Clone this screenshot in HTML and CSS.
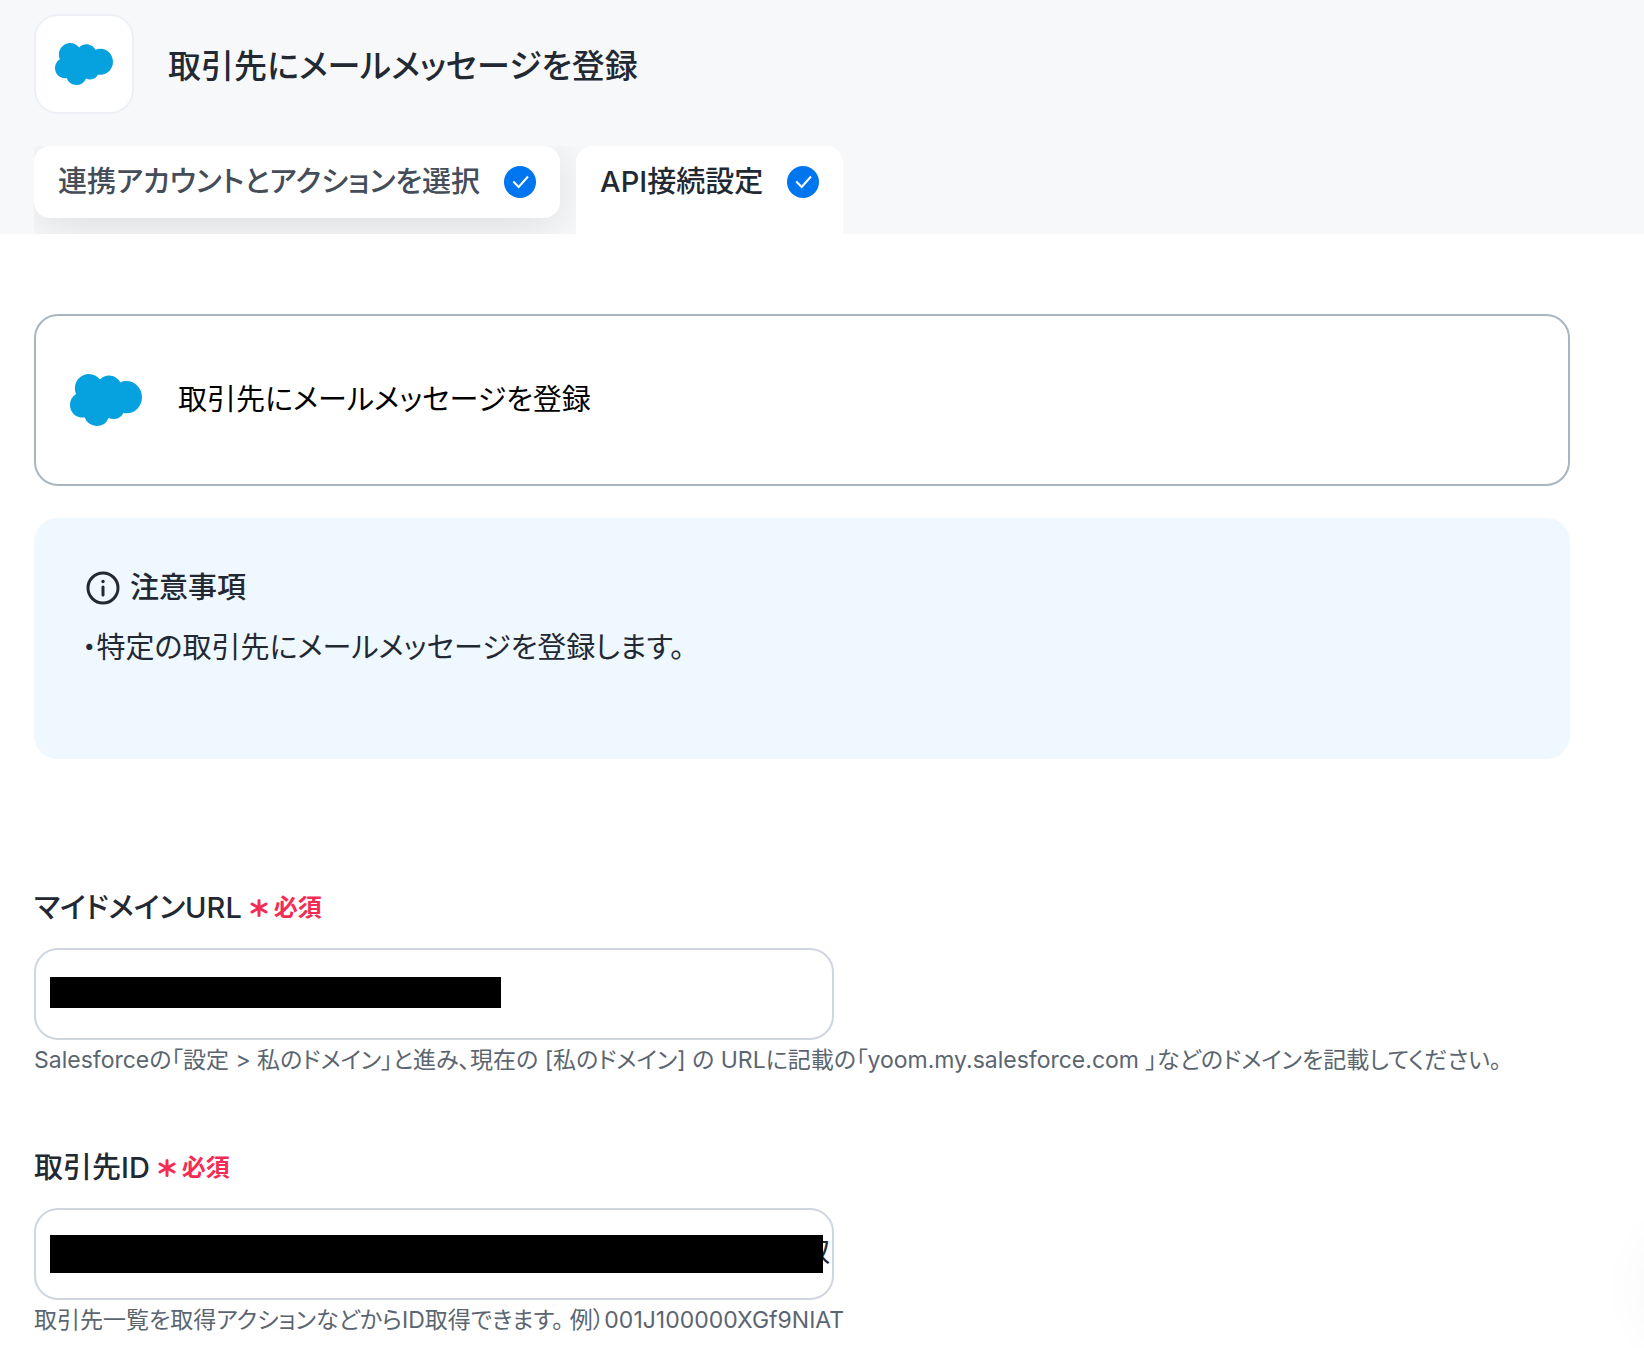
FILE: index.html
```html
<!DOCTYPE html>
<html lang="ja">
<head>
<meta charset="utf-8">
<meta name="viewport" content="width=device-width, initial-scale=1">
<title>取引先にメールメッセージを登録</title>
<link rel="stylesheet" href="styles.css">
</head>
<body>
<svg class="sprite" aria-hidden="true">
  <symbol id="cloud" viewBox="0 3.6 24 16.8" preserveAspectRatio="none">
    <path fill="#06a2df" d="M10.006 5.415a4.195 4.195 0 013.045-1.306c1.56 0 2.954.9 3.69 2.205.63-.3 1.35-.45 2.1-.45 2.85 0 5.159 2.34 5.159 5.22s-2.31 5.22-5.176 5.22c-.345 0-.69-.044-1.02-.104a3.75 3.75 0 01-3.3 1.95c-.6 0-1.155-.15-1.65-.375A4.314 4.314 0 018.88 20.4a4.302 4.302 0 01-4.05-2.82c-.27.062-.54.076-.825.076-2.204 0-4.005-1.8-4.005-4.05 0-1.5.811-2.805 2.01-3.51-.255-.57-.39-1.2-.39-1.846 0-2.58 2.1-4.65 4.65-4.65 1.53 0 2.85.705 3.72 1.8z"/>
  </symbol>
  <symbol id="check" viewBox="0 0 32 32">
    <circle cx="16" cy="16" r="16" fill="#0075f0"/>
    <path d="M9.300 15.500l5.400 5.500L24 10.500" fill="none" stroke="#fff" stroke-width="2"/>
  </symbol>
  <symbol id="star" viewBox="0 0 18 20">
    <path d="M9 2.500v15M2 6l14 8M16 6L2 14" fill="none" stroke="#f22c54" stroke-width="3" stroke-linecap="round"/>
  </symbol>
</svg>

<header class="header">
  <div class="heading">
    <span class="app-icon"><svg class="app-cloud"><use href="#cloud"/></svg></span>
    <h1 class="title">取引先にメールメッセージを登録</h1>
  </div>
  <nav class="tabs">
    <button type="button" class="tab">連携アカウントとアクションを選択<svg class="check"><use href="#check"/></svg></button>
    <button type="button" class="tab tab-active" aria-current="step">API接続設定<svg class="check"><use href="#check"/></svg></button>
  </nav>
</header>

<main class="content">
  <section class="action">
    <svg class="action-cloud"><use href="#cloud"/></svg>
    <span>取引先にメールメッセージを登録</span>
  </section>

  <section class="notice">
    <h2 class="notice-title">
      <svg class="info" viewBox="-4 0 38 34" fill="none" stroke="#222932" stroke-width="3"><circle cx="17" cy="17" r="15"/><path d="M17 16v8" stroke-linecap="round"/><circle cx="17" cy="10.500" r="1.700" fill="#222932" stroke="none"/></svg>
      注意事項
    </h2>
    <p class="notice-text">・特定の取引先にメールメッセージを登録します。</p>
  </section>

  <form class="form">
    <div class="field">
      <label class="label" for="domain">マイドメインURL<span class="required"><svg class="star"><use href="#star"/></svg>必須</span></label>
      <div class="control">
        <input class="input" id="domain" type="text">
        <span class="mask mask-short"></span>
      </div>
      <p class="help">Salesforceの「設定 &gt; 私のドメイン」と進み、現在の [私のドメイン] の URLに記載の「yoom.my.salesforce.com 」などのドメインを記載してください。</p>
    </div>
    <div class="field">
      <label class="label" for="account">取引先ID<span class="required"><svg class="star"><use href="#star"/></svg>必須</span></label>
      <div class="control">
        <input class="input input-end" id="account" type="text" value="取">
        <span class="mask mask-long"></span>
      </div>
      <p class="help">取引先一覧を取得アクションなどからID取得できます。 例）001J100000XGf9NIAT</p>
    </div>
  </form>
</main>
<div class="glow"></div>
</body>
</html>
```
FILE: styles.css
```css
* { box-sizing: border-box; }

body {
  margin: 0;
  background: #fff;
  color: #222932;
  font-family: Inter, "Noto Sans CJK JP", sans-serif;
  font-size: 29px;
  line-height: 40px;
  font-feature-settings: "palt";
}

h1, h2, p { margin: 0; }
svg { display: block; flex: none; }

.sprite { position: absolute; width: 0; height: 0; }

.header {
  padding: 14px 34px 0;
  background: #f7f8fa;
}

.heading {
  display: flex;
  align-items: center;
  gap: 34px;
}

.app-icon {
  display: grid;
  place-items: center;
  width: 100px;
  height: 100px;
  border: 2px solid #edf0f4;
  border-radius: 24px;
  background: #fff;
}

.app-cloud { width: 58px; height: 42px; }

.title {
  padding-top: 4px;
  font-size: 33px;
  font-weight: 500;
}

.tabs {
  display: flex;
  align-items: flex-start;
  gap: 16px;
  width: fit-content;
  margin-top: 32px;
  overflow: hidden;
}

.tab {
  display: flex;
  align-items: center;
  gap: 24px;
  height: 72px;
  margin-bottom: 16px;
  padding: 0 24px;
  border: 0;
  border-radius: 16px;
  background: #fff;
  box-shadow: 0 8px 48px rgba(0, 0, 0, 0.11);
  color: #444d58;
  font: inherit;
  font-weight: 500;
  font-feature-settings: inherit;
}

.tab-active {
  position: relative;
  height: 88px;
  margin-bottom: 0;
  padding-bottom: 16px;
  border-radius: 16px 16px 0 0;
  box-shadow: none;
  color: #222932;
}

.check { width: 32px; height: 32px; }

.content { padding: 80px 74px 6px 34px; }

.action {
  display: flex;
  align-items: center;
  gap: 36px;
  height: 172px;
  padding: 0 34px;
  border: 2px solid #a9b5c1;
  border-radius: 24px;
  color: #000;
}

.action-cloud { width: 72px; height: 52px; }

.notice {
  min-height: 241px;
  margin-top: 32px;
  padding: 50px 48px;
  border-radius: 24px;
  background: #eff7ff;
}

.notice-title {
  display: flex;
  align-items: center;
  gap: 10px;
  font-size: 29px;
  font-weight: 500;
}

.info { width: 38px; height: 34px; }

.notice-text { margin-top: 20px; }

.form {
  display: grid;
  gap: 68px;
  margin-top: 129px;
}

.label {
  display: flex;
  align-items: center;
  gap: 8px;
  font-weight: 500;
}

.required {
  display: flex;
  align-items: center;
  gap: 6px;
  color: #f22c54;
  font-size: 24px;
  font-weight: 600;
}

.star { width: 18px; height: 20px; }

.control {
  position: relative;
  max-width: 800px;
  margin-top: 20px;
}

.input {
  display: block;
  width: 100%;
  height: 92px;
  padding: 0 16px;
  border: 2px solid #cfd6e0;
  border-radius: 24px;
  background: #fff;
  color: inherit;
  font: inherit;
}

.input-end {
  padding: 0 2px 10px;
  text-align: right;
}

.mask {
  position: absolute;
  left: 16px;
  background: #000;
}

.mask-short { top: 29px; width: 451px; height: 31px; }
.mask-long { top: 27px; right: 11px; height: 38px; }

.help {
  color: #5b6570;
  font-size: 23px;
}

/* Soft halo of the help launcher docked past the right edge */
.glow {
  position: fixed;
  right: -100px;
  bottom: 20px;
  width: 80px;
  height: 80px;
  border-radius: 50%;
  box-shadow: 0 0 60px 16px rgba(0, 0, 0, 0.05);
  pointer-events: none;
}
```
